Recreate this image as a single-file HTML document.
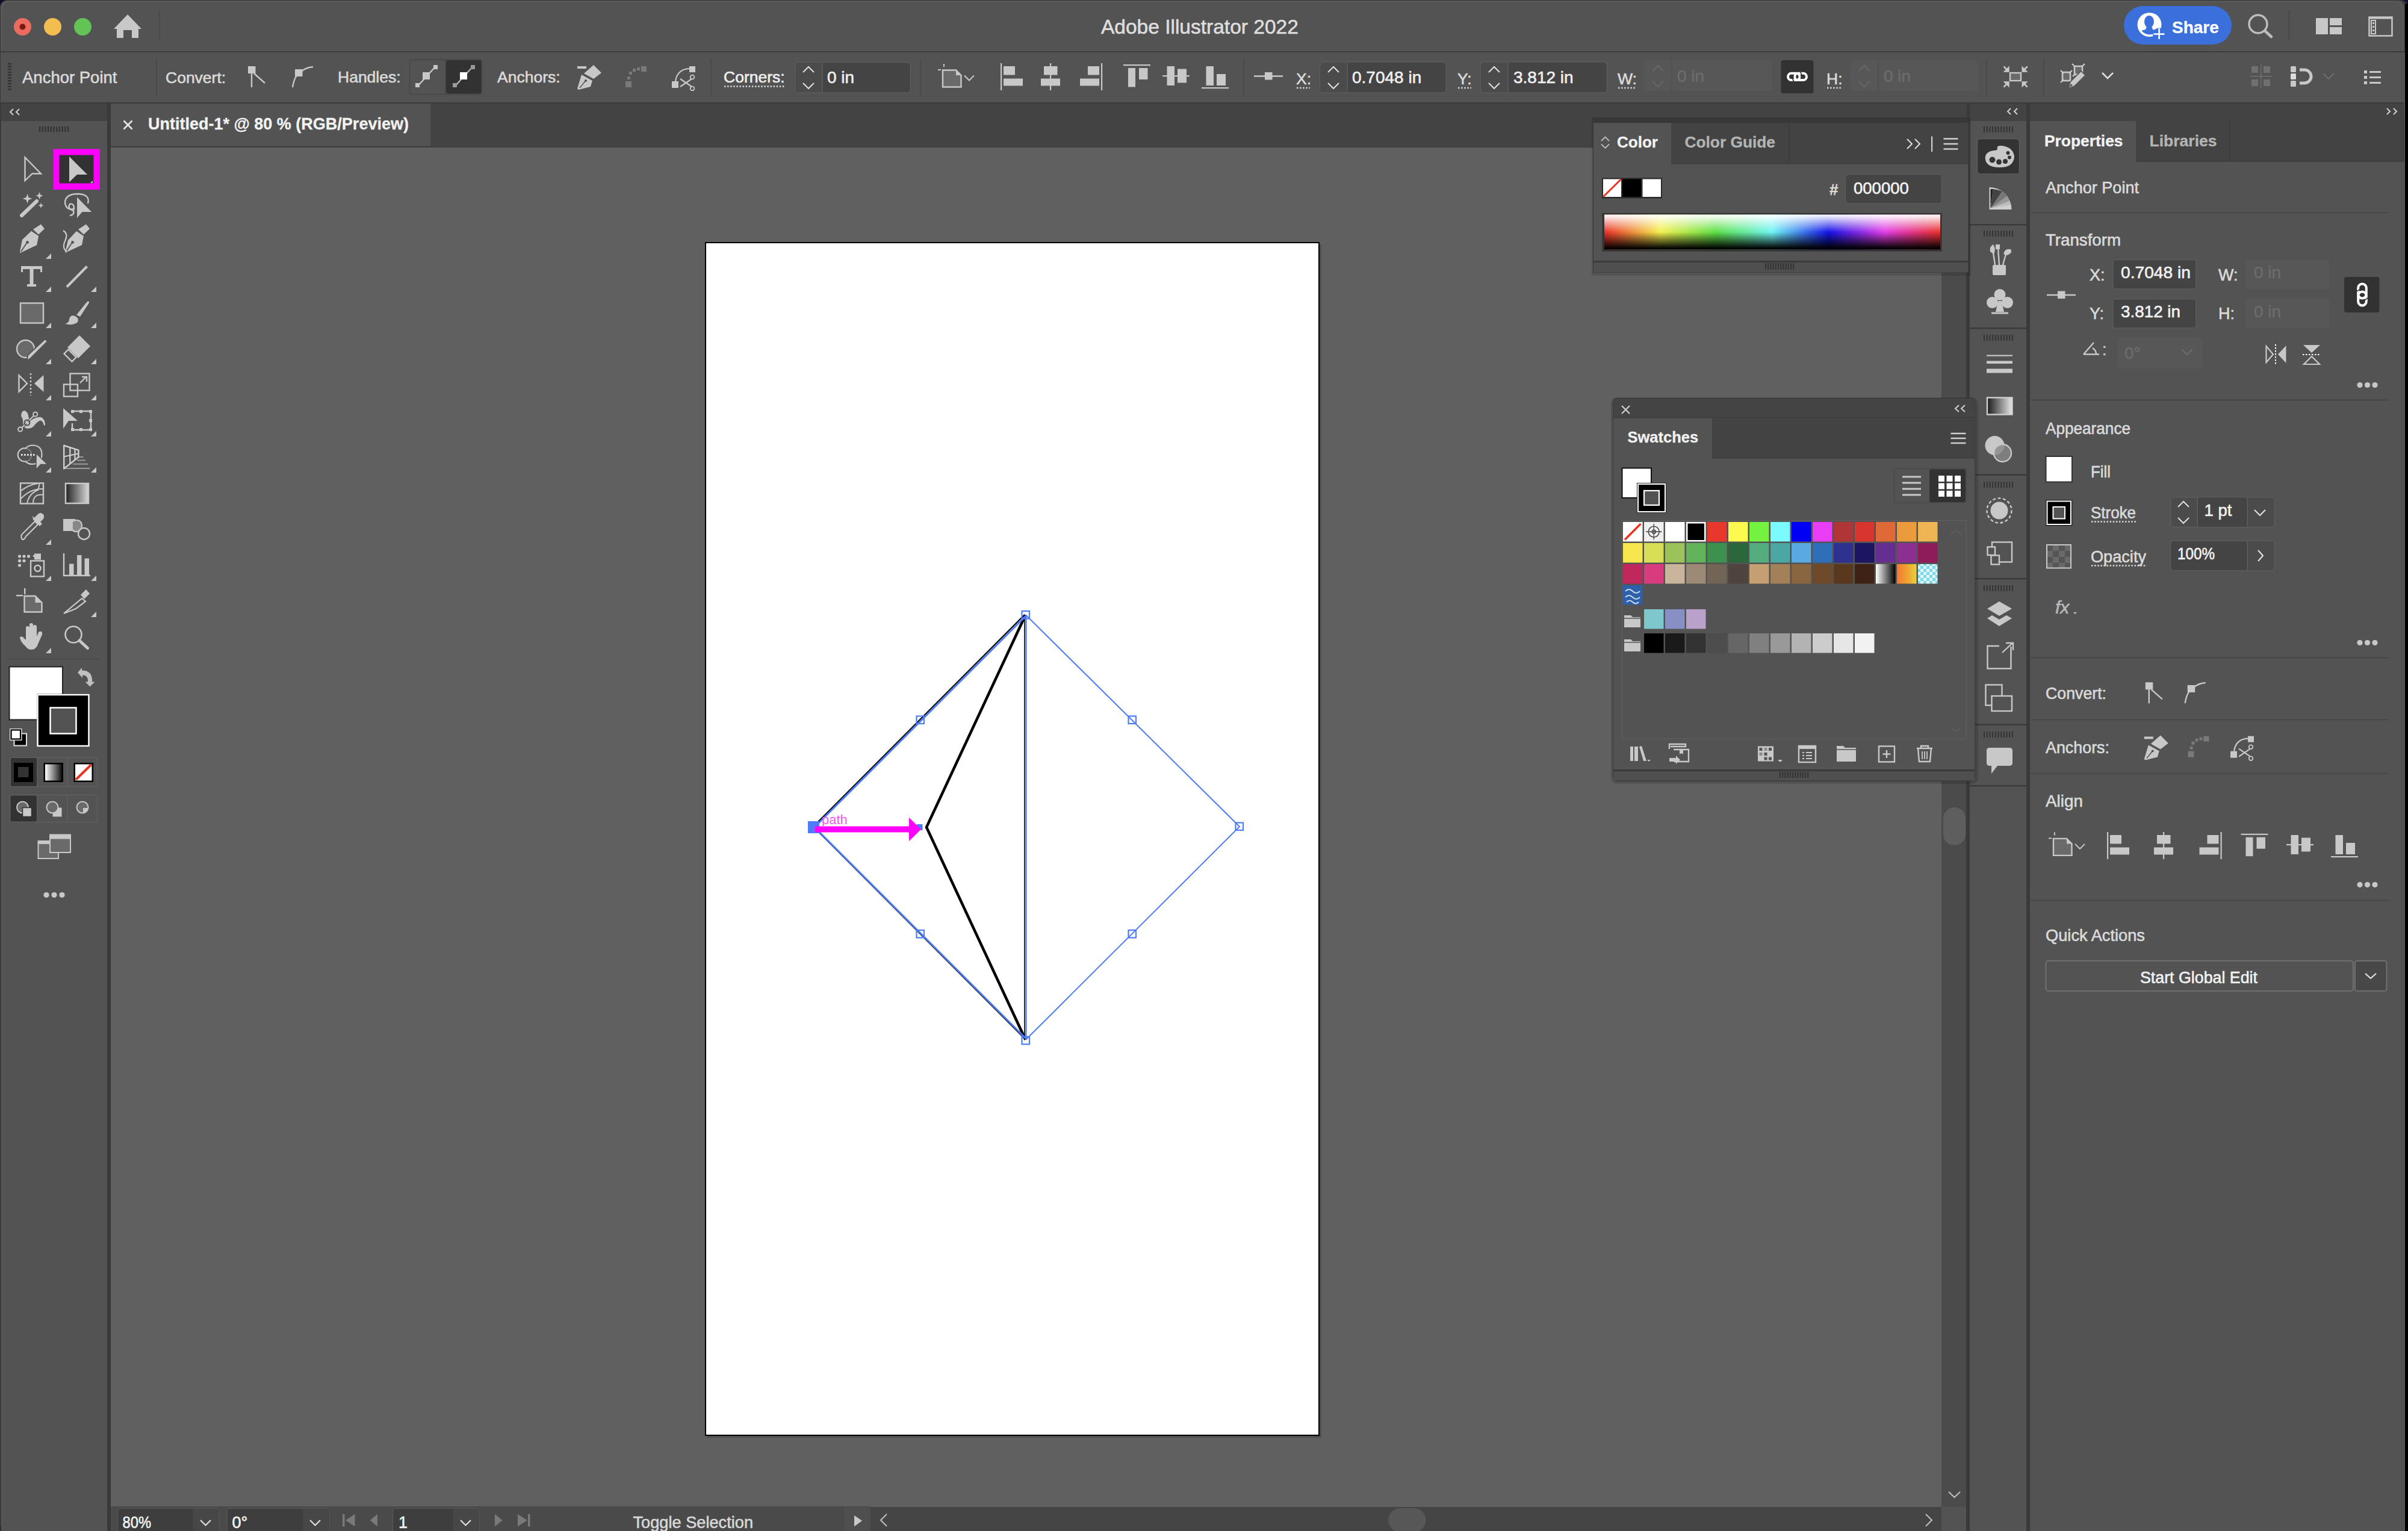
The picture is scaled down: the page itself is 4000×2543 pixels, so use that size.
<!DOCTYPE html>
<html><head><meta charset="utf-8">
<style>
*{margin:0;padding:0}
html,body{width:4000px;height:2543px;overflow:hidden;background:#2e2e2e}
svg{display:block}
text{font-family:"Liberation Sans",sans-serif;white-space:pre}
</style></head><body>
<svg width="4000" height="2543" viewBox="0 0 4000 2543">
<defs>
<linearGradient id="hue" x1="0" y1="0" x2="1" y2="0">
<stop offset="0" stop-color="#e8302a"/><stop offset="0.167" stop-color="#f4f050"/><stop offset="0.333" stop-color="#5ee048"/><stop offset="0.5" stop-color="#70f4f4"/><stop offset="0.667" stop-color="#1414e6"/><stop offset="0.833" stop-color="#e23ee6"/><stop offset="1" stop-color="#e8302a"/>
</linearGradient>
<linearGradient id="shade" x1="0" y1="0" x2="0" y2="1">
<stop offset="0" stop-color="#fff" stop-opacity="1"/><stop offset="0.5" stop-color="#fff" stop-opacity="0"/><stop offset="0.5" stop-color="#000" stop-opacity="0"/><stop offset="0.97" stop-color="#000" stop-opacity="1"/>
</linearGradient>
<linearGradient id="bw" x1="0" y1="0" x2="1" y2="0"><stop offset="0" stop-color="#fff"/><stop offset="1" stop-color="#000"/></linearGradient>
</defs>
<!-- ===== BASE ===== -->
<rect x="0" y="0" width="4000" height="40" fill="#140a2c"/>
<rect x="0" y="0" width="4000" height="2543" rx="12" fill="#3a3a3a"/>
<rect x="1" y="1" width="3993" height="84" rx="11" fill="#535353"/>
<rect x="1" y="40" width="3993" height="45" fill="#535353"/>
<path d="M3 85V14A11 11 0 0 1 14 3H3980A11 11 0 0 1 3991 14V85" fill="none" stroke="#5f5f5f" stroke-width="1.2"/>
<rect x="1" y="87" width="3993" height="83" fill="#535353"/>
<!-- left toolbar -->
<rect x="2.5" y="172" width="175.5" height="2371" fill="#535353"/>
<rect x="2.5" y="201" width="1.5" height="2342" fill="#5c5c5c"/>
<rect x="2.5" y="172" width="175.5" height="29" fill="#434343"/>
<!-- tab bar -->
<rect x="184" y="172" width="3083" height="72" fill="#434343"/>
<!-- canvas -->
<rect x="184" y="245" width="3041" height="2258" fill="#606060"/>
<rect x="3225" y="245" width="41" height="2298" fill="#4b4b4b"/>
<rect x="184" y="2503" width="3041" height="40" fill="#474747"/>
<!-- strip -->
<rect x="3272" y="172" width="94" height="2371" fill="#535353"/>
<rect x="3272" y="172" width="94" height="29" fill="#434343"/>
<!-- properties -->
<rect x="3372" y="172" width="622" height="2371" fill="#535353"/>
<rect x="3372" y="172" width="622" height="29" fill="#434343"/>
<!-- artboard -->
<rect x="1174" y="406" width="1021" height="1982" fill="#000" opacity="0.18"/>
<rect x="1171" y="402" width="1021" height="1983" fill="#000"/>
<rect x="1173" y="404" width="1017" height="1979" fill="#fff"/>
<rect x="3995" y="6" width="5" height="2537" fill="#000"/>
<rect x="3993.5" y="87" width="1.5" height="2456" fill="#5a5a5a"/>
<!-- ===== TITLEBAR ===== -->
<circle cx="37.5" cy="44.5" r="14.5" fill="#ec6b5f"/>
<circle cx="37.5" cy="44.5" r="5" fill="#7a1a12"/>
<circle cx="87.5" cy="44.5" r="14.5" fill="#f4bd4f"/>
<circle cx="137.5" cy="44.5" r="14.5" fill="#61c454"/>
<path d="M212 24 L235 48 L230 48 L230 63 L219 63 L219 50 L205 50 L205 63 L194 63 L194 48 L189 48 Z" fill="#c8c8c8"/>
<rect x="264" y="18" width="2" height="49" fill="#4a4a4a"/>
<text x="1829" y="56" font-size="33.5" fill="#dedede" stroke="#dedede" stroke-width="0.6">Adobe Illustrator 2022</text>
<rect x="3528" y="10" width="179" height="64" rx="32" fill="#3b6fdc"/>
<circle cx="3570.5" cy="41" r="20" fill="#fff"/>
<ellipse cx="3570" cy="36" rx="8" ry="10.2" fill="#3b6fdc"/>
<path d="M3566 44L3564 49Q3559 50 3557.5 51A16.4 16.4 0 0 0 3583.5 51Q3582 50 3576 49L3574 44Z" fill="#3b6fdc"/>
<circle cx="3586.5" cy="57" r="10.5" fill="#3b6fdc"/>
<rect x="3577.5" y="55.3" width="18" height="2.6" fill="#fff"/><rect x="3585.3" y="47.3" width="2.6" height="17.7" fill="#fff"/>
<text x="3608" y="55" font-size="28" font-weight="700" fill="#fff" stroke="#fff" stroke-width="0.3">Share</text>
<circle cx="3751" cy="40" r="15" fill="none" stroke="#bdbdbd" stroke-width="3.5"/>
<path d="M3762 51 L3773 61" stroke="#bdbdbd" stroke-width="4.5" stroke-linecap="round"/>
<rect x="3801" y="18" width="3" height="49" fill="#4a4a4a"/>
<rect x="3847" y="30" width="20" height="27" fill="#c8c8c8"/>
<rect x="3870" y="30" width="20" height="12" fill="#c8c8c8"/>
<rect x="3870" y="45" width="20" height="12" fill="#c8c8c8"/>
<rect x="3935.5" y="28.5" width="38" height="31" fill="none" stroke="#c8c8c8" stroke-width="2.5"/>
<rect x="3935.5" y="28.5" width="38" height="3" fill="#c8c8c8"/>
<rect x="3939" y="34" width="7" height="22" fill="none" stroke="#c8c8c8" stroke-width="2"/>
<rect x="3941" y="37" width="3" height="3" fill="#c8c8c8"/><rect x="3941" y="43" width="3" height="3" fill="#c8c8c8"/><rect x="3941" y="49" width="3" height="3" fill="#c8c8c8"/>
<!-- ===== CONTROLBAR ===== -->
<path d="M13 106h6M13 110.7h6M13 115.4h6M13 120.1h6M13 124.8h6M13 129.5h6M13 134.2h6M13 138.9h6M13 143.6h6M13 148.3h6" stroke="#333" stroke-width="2.4"/>
<g fill="#dadada" font-size="26.5" stroke="#dadada" stroke-width="0.6">
<text x="37" y="138" font-size="27.5">Anchor Point</text>
<text x="275" y="138">Convert:</text>
<text x="561" y="137">Handles:</text>
<text x="826" y="137">Anchors:</text>
<text x="1202" y="137" fill="#f0f0f0" stroke="#f0f0f0" stroke-width="0.6">Corners:</text>
<text x="2153" y="140">X:</text>
<text x="2421" y="140">Y:</text>
<text x="2687" y="140">W:</text>
<text x="3034" y="140">H:</text>
</g>
<path d="M1203 143.5h100M2154 146h22M2422 146h22M2688 146h28M3035 146h25" stroke="#dadada" stroke-width="2.5" stroke-dasharray="2.5 2.6"/>
<g fill="#4a4a4a">
<rect x="259" y="98" width="2" height="62"/>
<rect x="1180" y="98" width="2" height="62"/>
<rect x="1528" y="98" width="2" height="62"/>
<rect x="2065" y="98" width="2" height="62"/>
<rect x="3299" y="98" width="2" height="62"/>
<rect x="3394" y="98" width="2" height="62"/>
</g>
<!-- convert icons -->
<g fill="#c8c8c8" stroke="#c8c8c8" id="cv1">
<rect x="412" y="110" width="12.5" height="12" stroke="none"/>
<path d="M418 122V145M422 122L440 138" stroke-width="2.4" fill="none"/>
</g>
<g fill="#c8c8c8" stroke="#c8c8c8" id="cv2">
<rect x="490" y="115" width="12.5" height="12" stroke="none"/>
<path d="M486 145Q488 131 494 124M500 119Q508 112 520 111" stroke-width="2.4" fill="none"/>
</g>
<!-- handles group -->
<rect x="680.5" y="99" width="120" height="57.5" rx="4" fill="#535353" stroke="#474747" stroke-width="1.5"/>
<rect x="741" y="100" width="58.5" height="55.5" rx="3" fill="#323232"/>
<rect x="739.5" y="100" width="1.5" height="56" fill="#474747"/>
<g fill="#c8c8c8">
<path d="M693 144L723 111" stroke="#c8c8c8" stroke-width="2.4"/>
<rect x="690" y="138" width="7" height="7"/><rect x="720" y="108" width="7" height="7"/><rect x="702" y="120" width="12" height="12"/>
</g>
<path d="M755 144L785 111" stroke="#b0b0b0" stroke-width="2.4"/>
<rect x="752" y="138" width="7" height="7" fill="#9a9a9a"/><rect x="782" y="108" width="7" height="7" fill="#9a9a9a"/><rect x="764" y="120" width="12" height="12" fill="#fff"/>
<!-- anchors icons -->
<g id="an1"><g fill="#c8c8c8">
<rect x="959" y="110" width="15" height="4"/>
<path d="M970 122L986 108L999 121L986 131Z"/>
<path d="M966 124L984 134L981 144L961 149Q958 148 960 144Z"/>
</g>
<circle cx="973" cy="134" r="2" fill="#535353"/><path d="M963 146L972 135" stroke="#535353" stroke-width="1.5"/></g>
<g fill="#7a7a7a" id="an2">
<rect x="1039" y="135" width="10" height="10"/><rect x="1042" y="127" width="5" height="5"/><rect x="1045" y="119" width="5" height="5"/><rect x="1051" y="114" width="5" height="5"/><rect x="1058" y="112" width="5" height="5"/><rect x="1065" y="110" width="9" height="9"/>
</g>
<g fill="#c8c8c8" id="an3">
<rect x="1116" y="135" width="11" height="11"/><rect x="1145" y="110" width="10" height="10"/>
<path d="M1122 135Q1125 115 1145 114" stroke="#c8c8c8" stroke-width="2.2" fill="none"/>
<path d="M1130 131L1149 144M1130 144L1149 131" stroke="#c8c8c8" stroke-width="2.2"/>
<circle cx="1150" cy="128" r="3.3" fill="none" stroke="#c8c8c8" stroke-width="1.8"/><circle cx="1150" cy="147" r="3.3" fill="none" stroke="#c8c8c8" stroke-width="1.8"/>
</g>
<!-- corners input -->
<rect x="1321" y="103.5" width="191.5" height="50.5" rx="5" fill="#444" stroke="#5c5c5c" stroke-width="1.5"/>
<rect x="1322" y="104.5" width="43" height="48.5" rx="4" fill="#4b4b4b"/>
<rect x="1365" y="104" width="1.5" height="50" fill="#5c5c5c"/>
<path d="M1334 120L1343 111L1352 120M1334 138L1343 147L1352 138" stroke="#e0e0e0" stroke-width="2" fill="none"/>
<text x="1374" y="138" font-size="28" fill="#f0f0f0" stroke="#f0f0f0" stroke-width="0.6">0 in</text>
<!-- align icons -->
<g fill="#c8c8c8">
<g id="al0"><path d="M1566 116.5H1588L1596.5 125V144.5H1566Z" fill="#6a6a6a" stroke="#c8c8c8" stroke-width="2.4"/>
<path d="M1588 116.5V125H1596.5Z" fill="#c8c8c8"/>
<rect x="1558" y="115" width="5" height="2"/><rect x="1567" y="106" width="2" height="5"/>
<path d="M1602 125.5L1610 133.5L1618 125.5" stroke="#c8c8c8" stroke-width="2" fill="none"/></g>
<g id="al1"><rect x="1662" y="105" width="2.2" height="45"/><rect x="1667" y="110" width="19" height="14.5"/><rect x="1667" y="130.5" width="32" height="12"/></g>
<g id="al2"><rect x="1744" y="105" width="2.2" height="45"/><rect x="1734" y="110" width="22.5" height="14.5"/><rect x="1729" y="130.5" width="32" height="12"/></g>
<g id="al3"><rect x="1829" y="105" width="2.2" height="45"/><rect x="1807" y="110" width="19" height="14.5"/><rect x="1794" y="130.5" width="32" height="12"/></g>
<g id="al4"><rect x="1866" y="107" width="45" height="2.2"/><rect x="1874" y="113" width="12" height="31.5"/><rect x="1892" y="113" width="14.5" height="19"/></g>
<g id="al5"><rect x="1931" y="125" width="45" height="2.2"/><rect x="1938.5" y="110" width="12.5" height="32"/><rect x="1956" y="114.5" width="15" height="23"/></g>
<g id="al6"><rect x="1996" y="145" width="45" height="2.2"/><rect x="2003.5" y="110" width="12.5" height="32"/><rect x="2021" y="123" width="15" height="19"/></g>
</g>
<!-- transform point icon -->
<g id="tpt"><path d="M2083 126.5H2131" stroke="#c8c8c8" stroke-width="2.4"/>
<rect x="2101" y="120" width="12.5" height="12.5" fill="#c8c8c8"/></g>
<!-- X input -->
<rect x="2192.5" y="103" width="209.5" height="51" rx="5" fill="#444" stroke="#5c5c5c" stroke-width="1.5"/>
<rect x="2193.5" y="104" width="44" height="49" rx="4" fill="#4b4b4b"/>
<rect x="2237.5" y="103.5" width="1.5" height="50" fill="#5c5c5c"/>
<path d="M2206 120L2215 111L2224 120M2206 138L2215 147L2224 138" stroke="#e0e0e0" stroke-width="2" fill="none"/>
<text x="2246" y="138" font-size="28" fill="#f0f0f0" stroke="#f0f0f0" stroke-width="0.6">0.7048 in</text>
<!-- Y input -->
<rect x="2459.5" y="103" width="210" height="51" rx="5" fill="#444" stroke="#5c5c5c" stroke-width="1.5"/>
<rect x="2460.5" y="104" width="44" height="49" rx="4" fill="#4b4b4b"/>
<rect x="2504.5" y="103.5" width="1.5" height="50" fill="#5c5c5c"/>
<path d="M2473 120L2482 111L2491 120M2473 138L2482 147L2491 138" stroke="#e0e0e0" stroke-width="2" fill="none"/>
<text x="2514" y="138" font-size="28" fill="#f0f0f0" stroke="#f0f0f0" stroke-width="0.6">3.812 in</text>
<!-- W input disabled -->
<rect x="2731" y="100" width="212" height="51.5" rx="5" fill="#575757"/>
<rect x="2776" y="101" width="1.5" height="50" fill="#505050"/>
<path d="M2745 118L2754 109L2763 118M2745 135L2754 144L2763 135" stroke="#686868" stroke-width="2" fill="none"/>
<text x="2786" y="136" font-size="28" fill="#6c6c6c" stroke="#6c6c6c" stroke-width="0.6">0 in</text>
<!-- link -->
<rect x="2958.5" y="100" width="54" height="55" rx="4" fill="#323232"/>
<g fill="none" stroke="#fff" stroke-width="4">
<rect x="2970" y="121.8" width="19.5" height="11.3" rx="5.6"/><rect x="2981.3" y="121.8" width="19.7" height="11.3" rx="5.6"/>
</g>
<path d="M2980 135.5Q2976.5 131 2978.5 126.5M2990.5 119.5Q2994 124 2992 128.5" stroke="#323232" stroke-width="1.6" fill="none"/>
<!-- H input disabled -->
<rect x="3074" y="100" width="212" height="51.5" rx="5" fill="#575757"/>
<rect x="3119" y="101" width="1.5" height="50" fill="#505050"/>
<path d="M3088 118L3097 109L3106 118M3088 135L3097 144L3106 135" stroke="#686868" stroke-width="2" fill="none"/>
<text x="3129" y="136" font-size="28" fill="#6c6c6c" stroke="#6c6c6c" stroke-width="0.6">0 in</text>
<!-- isolate icon -->
<rect x="3339" y="121" width="18" height="13" fill="#6a6a6a" stroke="#c8c8c8" stroke-width="2.4"/>
<g fill="#c8c8c8">
<path d="M3337.7 109.5V119.7H3327.5Z"/><path d="M3358.5 109.5V119.7H3368.7Z"/>
<path d="M3337.7 145.5V135.3H3327.5Z"/><path d="M3358.5 145.5V135.3H3368.7Z"/>
</g>
<path d="M3328.5 110.5L3334 116M3367.7 110.5L3362.2 116M3328.5 144.5L3334 139M3367.7 144.5L3362.2 139" stroke="#c8c8c8" stroke-width="2.6"/>
<!-- edit icon -->
<rect x="3426" y="120" width="13" height="14" fill="#6a6a6a" stroke="#c8c8c8" stroke-width="2.6"/>
<rect x="3446" y="110" width="13" height="14" fill="#6a6a6a" stroke="#c8c8c8" stroke-width="2.6"/>
<path d="M3423 117l5 5M3442 117l-5 5M3423 137l5 -5M3447 111l-5 -5M3458 111l5 -5M3443 127l5 -5" stroke="#c8c8c8" stroke-width="2.4"/>
<path d="M3436 147L3439 136L3457 118L3464 125L3446 143Z" fill="#c8c8c8" stroke="#535353" stroke-width="1.6"/>
<path d="M3438 145L3440 139L3443 142Z" fill="#535353"/>
<path d="M3492 121L3501 130L3510 121" stroke="#e0e0e0" stroke-width="2.5" fill="none"/>
<!-- grid icon disabled -->
<g fill="#707070">
<rect x="3740" y="110" width="11" height="11"/><rect x="3760" y="110" width="11" height="11"/><rect x="3740" y="132" width="11" height="11"/><rect x="3760" y="132" width="11" height="11"/>
<rect x="3738" y="126" width="37" height="1.5"/><rect x="3755" y="107" width="1.5" height="39"/>
</g>
<!-- snap icon -->
<g fill="#c8c8c8">
<rect x="3805" y="110" width="9" height="10" rx="1.5"/><rect x="3805" y="122" width="9" height="10" rx="1.5" fill="#ddd"/><rect x="3805" y="134" width="9" height="10" rx="1.5"/>
<path d="M3820 116H3828A11 11 0 0 1 3828 138H3820" stroke="#c8c8c8" stroke-width="5" fill="none"/>
</g>
<path d="M3859 122L3868 131L3877 122" stroke="#6e6e6e" stroke-width="2" fill="none"/>
<!-- list icon -->
<g fill="#c8c8c8">
<rect x="3927" y="117" width="5" height="5"/><rect x="3927" y="126" width="5" height="5"/><rect x="3927" y="135" width="5" height="5"/>
<rect x="3936" y="118" width="19" height="3"/><rect x="3936" y="127" width="19" height="3"/><rect x="3936" y="136" width="19" height="3"/>
</g>
<!-- ===== TOOLS ===== -->
<path d="M22 181L17 186L22 191M32 181L27 186L32 191" stroke="#d0d0d0" stroke-width="2" fill="none"/>
<path d="M66 210v9M70.7 210v9M75.4 210v9M80.1 210v9M84.8 210v9M89.5 210v9M94.2 210v9M98.9 210v9M103.6 210v9M108.3 210v9M113 210v9" stroke="#333" stroke-width="2.2"/>
<g fill="#c8c8c8">
<!-- row1 selection -->
<path d="M41.5 261.5V300L53.5 288.5H68Z" fill="none" stroke="#c8c8c8" stroke-width="2.4" stroke-linejoin="miter"/>
<rect x="88.5" y="247.5" width="77.5" height="67.5" fill="#ff00ff"/>
<rect x="98.5" y="257.5" width="57" height="47" fill="#323232"/>
<path d="M115 260V302.5L128 290H145Z"/>
<path d="M154 300L150 304h4z" fill="#c8c8c8"/>
<!-- row2 magic wand / lasso -->
<path d="M36 358L61 334" stroke="#c8c8c8" stroke-width="6" stroke-linecap="round"/>
<path d="M45.5 322l2 6 6 2 -6 2 -2 6 -2 -6 -6 -2 6 -2z"/>
<path d="M65.5 319l1.6 4.5 4.5 1.6 -4.5 1.6 -1.6 4.5 -1.6 -4.5 -4.5 -1.6 4.5 -1.6z"/>
<path d="M68 336.5l1.2 3.5 3.5 1.2 -3.5 1.2 -1.2 3.5 -1.2 -3.5 -3.5 -1.2 3.5 -1.2z"/>
<path d="M128 327.5V362L136.5 352H152Z"/>
<path d="M146 338Q150 323 130 322Q108 322 108 337Q110 350 123 347Q123 337 116 339Q111 346 122 350Q124 357 116 358" fill="none" stroke="#c8c8c8" stroke-width="2.4"/>
<!-- row3 pen / curvature pen -->
<path d="M55 381l13-8.5 6 7.5 -10 9.5z"/>
<path d="M52 384L64 392L61 407L34 420L46 402Q43 399 46 397L33 418L37 398Z"/>
<path d="M52 384L64 392L61 407L33 420L38 399Z"/>
<circle cx="45.5" cy="402.5" r="2.4" fill="#535353"/><path d="M35 418L44 404" stroke="#535353" stroke-width="1.8"/>
<path d="M130 381l13-8.5 6 7.5 -10 9.5z"/>
<path d="M127 384L139 392L136 407L108 420L113 399Z"/>
<circle cx="120.5" cy="402.5" r="2.4" fill="#535353"/><path d="M110 418L119 404" stroke="#535353" stroke-width="1.8"/>
<path d="M105 383Q113 388 109 398Q102 412 111 418" fill="none" stroke="#c8c8c8" stroke-width="2.2"/>
<!-- row4 type / line -->
<path d="M35 442h35v10h-3v-5h-11.5v25h4.5v4h-15v-4h4.5v-25h-11.5v5h-3z"/>
<path d="M111 476.5L144.5 442.5" stroke="#c8c8c8" stroke-width="4"/>
<!-- row5 rect / brush -->
<rect x="34" y="503.5" width="38" height="33" fill="#6a6a6a" stroke="#c8c8c8" stroke-width="2.4"/>
<path d="M127 523L144 502Q148 498 148 503L133 526Z"/>
<path d="M125 525Q133 530 128 536Q120 541 108 538Q115 536 115 530Q117 522 125 525Z"/>
<!-- row6 shaper / eraser -->
<circle cx="42.5" cy="579.5" r="14.5" fill="#6a6a6a" stroke="#c8c8c8" stroke-width="2.4"/>
<path d="M46 590L75 563L79 567L51 595L45 599Z" stroke="#535353" stroke-width="2"/>
<path d="M132 557L150 575L130 595L112 577Z"/>
<path d="M113.5 580.5L126.5 593.5L119.5 600.5L106.5 587.5Z" fill="none" stroke="#c8c8c8" stroke-width="2.4"/>
<!-- row7 reflect / scale -->
<path d="M31.5 623.5V650.5L45 637Z" fill="none" stroke="#c8c8c8" stroke-width="2.4"/>
<path d="M72.5 623V651L57 637Z"/>
<path d="M51 620v37" stroke="#c8c8c8" stroke-width="2.4" stroke-dasharray="3 3"/>
<rect x="116.5" y="620.5" width="32" height="28" fill="none" stroke="#c8c8c8" stroke-width="2.4"/>
<rect x="106" y="638.5" width="23" height="20" fill="none" stroke="#c8c8c8" stroke-width="2.4"/>
<path d="M133 636L143 626M136 626h8v8" fill="none" stroke="#c8c8c8" stroke-width="2.4"/>
<!-- row8 puppet / free transform -->
<path d="M35 691Q35.5 682 41 682Q46.5 684 47.5 693Q48.5 698 52.5 697.5Q61 692 68.5 693Q75.5 697 75 706.5L73.2 707Q71 698 66.5 698.5Q61 701 56 708Q50 713 43.5 711.5Q38 709 38 702Q38.5 696 35 691Z"/>
<path d="M33.6 713L58.7 688" stroke="#535353" stroke-width="4"/>
<path d="M33.6 713L58.7 688" stroke="#c8c8c8" stroke-width="2"/>
<circle cx="33.6" cy="713" r="3.6" fill="#535353" stroke="#c8c8c8" stroke-width="2"/>
<circle cx="58.7" cy="688" r="3.6" fill="#535353" stroke="#c8c8c8" stroke-width="2"/>
<circle cx="44.9" cy="702" r="4.5" fill="none" stroke="#535353" stroke-width="2"/>
<circle cx="44.9" cy="702" r="2.2" fill="#c8c8c8"/>
<path d="M105 678V712L114 699H129Z"/>
<path d="M120 683H151V714H120V703" fill="none" stroke="#c8c8c8" stroke-width="2.4"/>
<rect x="118" y="681" width="5" height="5"/><rect x="132" y="681" width="5" height="5"/><rect x="148" y="681" width="5" height="5"/><rect x="148" y="696" width="5" height="5"/><rect x="148" y="711" width="5" height="5"/><rect x="132" y="711" width="5" height="5"/><rect x="118" y="711" width="5" height="5"/>
<!-- row9 shape builder / perspective -->
<path d="M44 745A11 11 0 1 0 44 766" fill="none" stroke="#c8c8c8" stroke-width="2.2"/>
<path d="M42.5 745Q46 740 54 739.5Q69.5 740 69.5 755Q69.5 770 54 771Q46 771 42.5 766" fill="none" stroke="#c8c8c8" stroke-width="2.2"/>
<path d="M44 745A11 11 0 0 1 45 766" fill="none" stroke="#8a8a8a" stroke-width="1.8"/>
<path d="M35 755.5h24" stroke="#fff" stroke-width="2.4" stroke-dasharray="2.6 2.4"/>
<path d="M60 753V780L67.5 771.5H79Z" stroke="#535353" stroke-width="1.5"/>
<path d="M130 759h8.5M128 764.5h14M121 770.8h25M109 778h40.5" stroke="#9a9a9a" stroke-width="2"/>
<path d="M106.2 740V778.5L130.4 759.2V747.7Z" fill="#535353" stroke="#d0d0d0" stroke-width="2.4" stroke-linejoin="round"/>
<path d="M116.3 743V770M124.5 746V764M106 758.5L130.4 753.5" stroke="#d0d0d0" stroke-width="2.2"/>
<!-- row10 mesh / gradient -->
<rect x="34" y="802.5" width="38" height="34" fill="none" stroke="#c8c8c8" stroke-width="2.4"/>
<path d="M35 815Q48 805 63 803M35 828Q50 812 71 812M45 836Q48 820 63 814Q66 805 65 803M55 836Q55 820 71 822" fill="none" stroke="#c8c8c8" stroke-width="2"/>
<defs><linearGradient id="tg" x1="0" x2="1"><stop offset="0" stop-color="#222"/><stop offset="1" stop-color="#d8d8d8"/></linearGradient></defs>
<rect x="109" y="803" width="38" height="33" fill="url(#tg)" stroke="#c8c8c8" stroke-width="2.5"/>
<!-- row11 eyedropper / blend -->
<path d="M37 896Q33 890 38 886L58 866L63 871L43 891Q40 897 37 896Z" fill="none" stroke="#c8c8c8" stroke-width="2.2"/>
<path d="M55 863L66 874L70 870L67 867L72 862Q75 855 70 853Q66 850 62 855L57 860L54 857Z"/>
<rect x="105" y="862" width="20" height="20"/>
<path d="M120 872Q118 864 127 864Q135 864 136 872Q136 882 128 883Q118 884 120 872Z" fill="#888" stroke="#c8c8c8" stroke-width="2.2"/>
<circle cx="139.5" cy="886.5" r="9.5" fill="#535353" stroke="#c8c8c8" stroke-width="2.4"/>
<!-- row12 symbol sprayer / graph -->
<circle cx="32.5" cy="924" r="2.6"/><circle cx="40" cy="924" r="2.6"/><circle cx="47.5" cy="924" r="2.6"/><circle cx="32.5" cy="931.5" r="2.6"/><circle cx="40" cy="931.5" r="2.6"/><circle cx="32.5" cy="939" r="2.6"/>
<rect x="51" y="931.5" width="22" height="26" fill="none" stroke="#c8c8c8" stroke-width="2.4"/>
<rect x="57" y="919.5" width="11" height="10"/><rect x="55" y="922" width="4" height="3"/>
<circle cx="62.5" cy="944" r="5" fill="none" stroke="#c8c8c8" stroke-width="2.6"/>
<path d="M106 919V956H150" fill="none" stroke="#c8c8c8" stroke-width="2.4"/>
<rect x="115" y="936.5" width="7.5" height="19"/><rect x="128" y="922" width="7.5" height="33.5"/><rect x="140.5" y="927.5" width="7.5" height="28"/>
<!-- row13 artboard / slice -->
<path d="M40.5 990H58.5L69.5 1001V1016.5H40.5Z" fill="#6a6a6a" stroke="#c8c8c8" stroke-width="2.4"/>
<path d="M58.5 990V1001H69.5Z"/>
<rect x="27" y="988" width="11" height="2.4"/><rect x="40" y="977" width="2.4" height="10"/>
<path d="M106 1019L136 994L142 999L126 1011Z" fill="none" stroke="#c8c8c8" stroke-width="2.2"/>
<path d="M134 988L143 979L149 986L140 995Z"/>
<!-- row14 hand / zoom -->
<path d="M42 1073Q34 1066 33 1059Q34 1056 38 1058L43 1063V1043Q43 1040 46 1040Q49 1040 49 1043V1055V1038Q49 1035 52 1035Q55 1035 55 1038V1055V1041Q55 1038 58 1038Q61 1038 61 1041V1057L64 1050Q66 1048 69 1049Q71 1051 70 1054L63 1070Q60 1079 52 1079Q46 1079 42 1073Z"/>
<circle cx="122" cy="1054" r="13.5" fill="none" stroke="#c8c8c8" stroke-width="2.6"/>
<path d="M132 1064L145.5 1076.5" stroke="#c8c8c8" stroke-width="5" stroke-linecap="round"/>
<!-- corner triangles -->
<path d="M85 476v9h-9z"/><path d="M160 476v9h-9z"/>
<path d="M85 536v9h-9z"/><path d="M160 536v9h-9z"/>
<path d="M85 596v9h-9z"/><path d="M160 596v9h-9z"/>
<path d="M85 656v9h-9z"/><path d="M160 656v9h-9z"/>
<path d="M85 716v9h-9z"/><path d="M160 716v9h-9z"/>
<path d="M85 776v9h-9z"/><path d="M160 776v9h-9z"/>
<path d="M85 421v9h-9z"/>
<path d="M85 896v9h-9z"/>
<path d="M85 956v9h-9z"/><path d="M160 956v9h-9z"/>
<path d="M160 1016v9h-9z"/>
<path d="M85 1076v9h-9z"/>
</g>
<rect x="15" y="1094" width="150" height="1.5" fill="#4a4a4a"/>
<!-- fill stroke -->
<rect x="15.5" y="1107.5" width="88.5" height="88" fill="#fff" stroke="#222" stroke-width="2"/>
<rect x="61" y="1152.5" width="88" height="88" fill="#2a2a2a"/>
<rect x="62.5" y="1154" width="85" height="85" fill="#000" stroke="#fff" stroke-width="2.5"/>
<rect x="83.5" y="1175.5" width="43" height="43" fill="#535353" stroke="#fff" stroke-width="2.5"/>
<path d="M129 1117l7-8v4.5q17 0 17 17v2h4.5l-8 8-8-8h4.5v-2q0-9-9-9v4.5z" fill="#c0c0c0"/>
<rect x="23.5" y="1218.5" width="20.5" height="20" fill="#000" stroke="#e0e0e0" stroke-width="2"/>
<rect x="16" y="1210" width="20.5" height="20" fill="#e0e0e0"/>
<rect x="18.5" y="1212.5" width="15.5" height="15" fill="#fff" stroke="#000" stroke-width="2.2"/>
<!-- mode buttons -->
<rect x="17.5" y="1258.5" width="144" height="48" rx="3" fill="#535353" stroke="#5f5f5f" stroke-width="1.5"/>
<rect x="18" y="1259" width="43" height="47" rx="2" fill="#323232"/>
<rect x="61" y="1259" width="1.5" height="47" fill="#5f5f5f"/><rect x="111" y="1259" width="1.5" height="47" fill="#5f5f5f"/>
<rect x="23" y="1267" width="32" height="32" fill="#000"/><rect x="30" y="1274" width="17.5" height="17" fill="#333"/>
<rect x="72.5" y="1267" width="32.5" height="32" fill="#000"/>
<defs><linearGradient id="wg" x1="0" x2="1"><stop offset="0" stop-color="#fff"/><stop offset="1" stop-color="#111"/></linearGradient></defs>
<rect x="75" y="1269.5" width="27.5" height="27" fill="url(#wg)"/>
<rect x="122.5" y="1267" width="32.5" height="32" fill="#000"/><rect x="125" y="1269.5" width="27.5" height="27" fill="#fff"/>
<path d="M126 1295L151.5 1270" stroke="#e8341e" stroke-width="4"/>
<!-- draw modes -->
<rect x="16.5" y="1320.5" width="145" height="45" rx="3" fill="#535353" stroke="#5f5f5f" stroke-width="1.5"/>
<rect x="17.5" y="1321.5" width="43.5" height="43" rx="2" fill="#323232"/>
<rect x="61" y="1321" width="1.5" height="44" fill="#5f5f5f"/><rect x="111" y="1321" width="1.5" height="44" fill="#5f5f5f"/>
<circle cx="37.5" cy="1341" r="9.5" fill="#6a6a6a" stroke="#c8c8c8" stroke-width="2"/>
<rect x="37.5" y="1341.5" width="15" height="15" fill="#c8c8c8" stroke="#323232" stroke-width="1.5"/>
<rect x="87.5" y="1341.5" width="15" height="15" fill="#c8c8c8"/>
<circle cx="87" cy="1341" r="9.5" fill="#6a6a6a" stroke="#c8c8c8" stroke-width="2"/>
<circle cx="137" cy="1341" r="9.5" fill="#6a6a6a" stroke="#c8c8c8" stroke-width="2"/>
<path d="M138 1342h8.5a9 9 0 0 1 -8.5 8.5z" fill="#c8c8c8"/>
<!-- screen mode -->
<rect x="63.5" y="1397" width="33.5" height="29" fill="#6a6a6a" stroke="#c8c8c8" stroke-width="2"/>
<rect x="63.5" y="1397" width="33.5" height="5" fill="#c8c8c8"/>
<rect x="83" y="1386.5" width="34" height="29.5" fill="#6a6a6a" stroke="#c8c8c8" stroke-width="2"/>
<rect x="83" y="1386.5" width="34" height="7" fill="#c8c8c8"/>
<circle cx="77" cy="1486.5" r="4.6" fill="#c8c8c8"/><circle cx="90" cy="1486.5" r="4.6" fill="#c8c8c8"/><circle cx="103" cy="1486.5" r="4.6" fill="#c8c8c8"/>
<!-- ===== TAB ===== -->
<rect x="184" y="172" width="531.5" height="70.5" fill="#535353"/>
<path d="M205.5 200.5L219.5 214.5M219.5 200.5L205.5 214.5" stroke="#e8e8e8" stroke-width="2.6"/>
<text x="246" y="215" font-size="27" font-weight="700" fill="#f2f2f2" stroke="#f2f2f2" stroke-width="0.3">Untitled-1* @ 80 % (RGB/Preview)</text>
<!-- ===== DRAWING ===== -->
<path d="M1703.5 1021.5L1539 1374L1703.5 1727" fill="none" stroke="#000" stroke-width="4.5" stroke-linejoin="miter"/>
<path d="M1702 1021.5V1727" stroke="#000" stroke-width="1.6"/>
<path d="M1702 1021L1351 1373L1702 1725" fill="none" stroke="#000" stroke-width="2.2"/>
<path d="M1703.5 1023.5L1353 1374L1703.5 1724.5" fill="none" stroke="#4e7cf6" stroke-width="3"/>
<path d="M1704.5 1021.5V1727" stroke="#4e7cf6" stroke-width="2.2"/>
<path d="M1704 1021.5L2059 1373L1704 1727" fill="none" stroke="#4e7cf6" stroke-width="2"/>
<g fill="none" stroke="#4e7cf6" stroke-width="2.2">
<rect x="1697.5" y="1015" width="12.5" height="12.5"/>
<rect x="1697.5" y="1722" width="12.5" height="12.5"/>
<rect x="2052.5" y="1366.5" width="12.5" height="12.5"/>
<rect x="1522.5" y="1189.5" width="12.5" height="12.5"/>
<rect x="1874.5" y="1189.5" width="12.5" height="12.5"/>
<rect x="1522.5" y="1545" width="12.5" height="12.5"/>
<rect x="1874.5" y="1545" width="12.5" height="12.5"/>
</g>
<rect x="1342" y="1364" width="19" height="20" fill="#4e7cf6"/>
<rect x="1523" y="1369" width="9.5" height="10" fill="#4e7cf6"/>
<rect x="1354" y="1372.5" width="158" height="10" fill="#ff00ff"/>
<path d="M1510 1358L1530 1377.5L1510 1397Z" fill="#ff00ff"/>
<text x="1365" y="1369" font-size="22" fill="#f25cf2">path</text>
<!-- ===== STRIP ===== -->
<path d="M3340 180L3335 185L3340 190M3351 180L3346 185L3351 190" stroke="#d0d0d0" stroke-width="2" fill="none"/>
<g fill="#3a3a3a">
<rect x="3272" y="372" width="94" height="2.5"/>
<rect x="3272" y="544" width="94" height="2.5"/>
<rect x="3272" y="787.5" width="94" height="2.5"/>
<rect x="3272" y="960" width="94" height="2.5"/>
<rect x="3272" y="1202.5" width="94" height="2.5"/>
<rect x="3272" y="1304" width="94" height="2.5"/>
</g>
<g stroke="#333" stroke-width="2">
<path d="M3296 210v10M3300.7 210v10M3305.4 210v10M3310.1 210v10M3314.8 210v10M3319.5 210v10M3324.2 210v10M3328.9 210v10M3333.6 210v10M3338.3 210v10M3343 210v10"/>
<path d="M3296 383v10M3300.7 383v10M3305.4 383v10M3310.1 383v10M3314.8 383v10M3319.5 383v10M3324.2 383v10M3328.9 383v10M3333.6 383v10M3338.3 383v10M3343 383v10"/>
<path d="M3296 556v10M3300.7 556v10M3305.4 556v10M3310.1 556v10M3314.8 556v10M3319.5 556v10M3324.2 556v10M3328.9 556v10M3333.6 556v10M3338.3 556v10M3343 556v10"/>
<path d="M3296 800v10M3300.7 800v10M3305.4 800v10M3310.1 800v10M3314.8 800v10M3319.5 800v10M3324.2 800v10M3328.9 800v10M3333.6 800v10M3338.3 800v10M3343 800v10"/>
<path d="M3296 972v10M3300.7 972v10M3305.4 972v10M3310.1 972v10M3314.8 972v10M3319.5 972v10M3324.2 972v10M3328.9 972v10M3333.6 972v10M3338.3 972v10M3343 972v10"/>
<path d="M3296 1215v10M3300.7 1215v10M3305.4 1215v10M3310.1 1215v10M3314.8 1215v10M3319.5 1215v10M3324.2 1215v10M3328.9 1215v10M3333.6 1215v10M3338.3 1215v10M3343 1215v10"/>
</g>
<rect x="3284.5" y="230.5" width="70" height="58.5" rx="5" fill="#333" stroke="#5c5c5c" stroke-width="1.5"/>
<path d="M3298 265Q3296 252 3312 250Q3318 250 3318 247Q3316 242 3324 242Q3344 244 3346 260Q3345 278 3322 278Q3300 278 3298 265Z" fill="#c8c8c8"/>
<g fill="#333"><circle cx="3309.5" cy="265.5" r="5"/><circle cx="3320.5" cy="269" r="4.5"/><circle cx="3331" cy="268" r="4"/><circle cx="3338" cy="261.5" r="3"/><circle cx="3335.5" cy="254" r="3"/></g>
<path d="M3304.5 311V348H3341.5A37 37 0 0 0 3304.5 311Z" fill="#cfcfcf"/>
<path d="M3306.5 314V346L3311 314Z" fill="#222"/>
<path d="M3306.5 346L3311 314Q3320 315 3326 318Z" fill="#444"/>
<path d="M3306.5 346L3326 318Q3332 322 3334 326Z" fill="#777"/>
<path d="M3306.5 346L3334 326Q3337 330 3338 334Z" fill="#999"/>
<path d="M3306.5 346L3338 334Q3339.5 338 3339.5 340Z" fill="#bbb"/>
<g fill="#c8c8c8">
<rect x="3310" y="440" width="22" height="17" rx="2"/>
<path d="M3314 440L3311 420M3321 440L3319 412M3327 440L3332 422" stroke="#c8c8c8" stroke-width="2.4"/>
<path d="M3306 418Q3304 410 3311 406Q3316 414 3312 422Z"/>
<rect x="3315" y="406" width="7" height="8"/>
<path d="M3328 422Q3330 412 3340 414Q3344 420 3334 424Z"/>
<circle cx="3322" cy="489.5" r="9.5"/><circle cx="3309.5" cy="502.5" r="9.5"/><circle cx="3334.5" cy="502.5" r="9.5"/>
<path d="M3319 500L3315 518H3329L3325 500Z"/>
<rect x="3308" y="518.5" width="28" height="3"/>
<rect x="3300" y="589.5" width="43" height="2.2"/>
<rect x="3300" y="599.5" width="43" height="4.5"/>
<rect x="3300" y="612.5" width="43" height="7"/>
</g>
<defs><linearGradient id="sg" x1="0" x2="1"><stop offset="0" stop-color="#1a1a1a"/><stop offset="1" stop-color="#e8e8e8"/></linearGradient></defs>
<rect x="3301" y="660.5" width="41.5" height="28" fill="url(#sg)" stroke="#d0d0d0" stroke-width="2.4"/>
<circle cx="3313.5" cy="740" r="16" fill="#c8c8c8"/>
<circle cx="3326.5" cy="752.5" r="14.5" fill="#888" fill-opacity="0.8" stroke="#c8c8c8" stroke-width="2.4"/>
<circle cx="3321" cy="848" r="14.5" fill="#c8c8c8"/>
<circle cx="3321" cy="848" r="20.5" fill="none" stroke="#c8c8c8" stroke-width="2.4" stroke-dasharray="5 3.5"/>
<g fill="none" stroke="#c8c8c8" stroke-width="2.4">
<rect x="3309" y="900.5" width="33" height="33"/>
<rect x="3301.5" y="908.5" width="12.5" height="13.5" fill="#535353"/>
<rect x="3307.5" y="922.5" width="13.5" height="15" fill="#535353"/>
<path d="M3340.5 1074V1110.5H3301.5V1073H3321"/>
<path d="M3326 1084L3343 1068M3332 1068H3344V1080"/>
<rect x="3298.5" y="1137.5" width="27" height="34"/>
<rect x="3308.5" y="1156" width="33.5" height="25" fill="#535353"/>
</g>
<g fill="#c8c8c8">
<path d="M3321 999L3342 1011L3321 1023L3301 1011Z"/>
<path d="M3301 1027L3309 1022L3321 1029L3333 1022L3342 1027L3321 1040Z"/>
<path d="M3305 1242H3338Q3343 1242 3343 1247V1267Q3343 1272 3338 1272H3318L3308 1285V1272H3305Q3300 1272 3300 1267V1247Q3300 1242 3305 1242Z"/>
</g>
<!-- ===== COLOR PANEL ===== -->
<rect x="2644" y="196" width="630" height="262" fill="#000" opacity="0.12"/>
<rect x="2646" y="195" width="624" height="258" fill="#383838"/>
<rect x="2647" y="204" width="622.5" height="229" fill="#535353"/>
<rect x="2776" y="204" width="493.5" height="68" fill="#434343"/>
<rect x="2776" y="271" width="493.5" height="1.5" fill="#3d3d3d"/>
<rect x="2971" y="204" width="1.5" height="68" fill="#3a3a3a"/>
<path d="M2660 234L2666.5 227.5L2673 234M2660 239.5L2666.5 246L2673 239.5" stroke="#bdbdbd" stroke-width="1.8" fill="none"/>
<text x="2686" y="245" font-size="26" font-weight="700" fill="#f2f2f2" stroke="#f2f2f2" stroke-width="0.3">Color</text>
<text x="2798.5" y="245" font-size="26.3" font-weight="700" fill="#b4b4b4" stroke="#b4b4b4" stroke-width="0.3">Color Guide</text>
<path d="M3168 231L3176 239L3168 247M3181 231L3189 239L3181 247" stroke="#e0e0e0" stroke-width="2" fill="none"/>
<rect x="3208" y="226.5" width="2.2" height="25.5" fill="#d0d0d0"/>
<path d="M3228.5 230.5h24M3228.5 239h24M3228.5 247.5h24" stroke="#d0d0d0" stroke-width="2.4"/>
<rect x="2661" y="295.5" width="100" height="34" fill="#2a2a2a"/>
<rect x="2663" y="297.5" width="30" height="29.5" fill="#fff"/>
<path d="M2663.5 326.5L2693 297.5" stroke="#e8341e" stroke-width="3"/>
<rect x="2695" y="297.5" width="31" height="29.5" fill="#000"/>
<rect x="2728.5" y="297.5" width="30.5" height="29.5" fill="#fff"/>
<text x="3039" y="324" font-size="26" font-weight="700" fill="#dcdcdc" stroke="#dcdcdc" stroke-width="0.3">#</text>
<rect x="3065.5" y="289.5" width="160" height="48.5" rx="5" fill="#444" stroke="#5a5a5a" stroke-width="1.5"/>
<text x="3079" y="322" font-size="27.5" fill="#f2f2f2" stroke="#f2f2f2" stroke-width="0.6">000000</text>
<rect x="2661.5" y="354" width="564" height="63.5" fill="#333"/>
<rect x="2665" y="356.5" width="558" height="58" fill="url(#hue)"/>
<rect x="2665" y="356.5" width="558" height="58" fill="url(#shade)"/>
<rect x="2647" y="433" width="622.5" height="3" fill="#3a3a3a"/>
<rect x="2647" y="436" width="622.5" height="16.5" fill="#4f4f4f"/>
<path d="M2933 437v11M2937.2 437v11M2941.4 437v11M2945.6 437v11M2949.8 437v11M2954 437v11M2958.2 437v11M2962.4 437v11M2966.6 437v11M2970.8 437v11M2975 437v11M2979.2 437v11" stroke="#333" stroke-width="2"/>
<!-- ===== SWATCHES ===== -->
<defs>
<linearGradient id="oy" x1="0" x2="1"><stop offset="0" stop-color="#f07a30"/><stop offset="0.5" stop-color="#f0a030"/><stop offset="1" stop-color="#e8d040"/></linearGradient>
<pattern id="chk" width="10" height="10" patternUnits="userSpaceOnUse"><rect width="10" height="10" fill="#dff6fa"/><rect width="5" height="5" fill="#7fd8ea"/><rect x="5" y="5" width="5" height="5" fill="#7fd8ea"/></pattern>
</defs>
<rect x="2676" y="660" width="610" height="642" rx="10" fill="#000" opacity="0.14"/>
<rect x="2679" y="661" width="602" height="637" rx="8" fill="#3a3a3a"/>
<rect x="2680" y="662" width="600" height="32" rx="7" fill="#444"/>
<rect x="2680" y="680" width="600" height="14" fill="#444"/>
<rect x="2680" y="693" width="600" height="1.5" fill="#3a3a3a"/>
<path d="M2694 674L2707 687M2707 674L2694 687" stroke="#d0d0d0" stroke-width="2.2"/>
<path d="M3254 673L3248 678.5L3254 684M3264 673L3258 678.5L3264 684" stroke="#d0d0d0" stroke-width="2" fill="none"/>
<rect x="2680" y="694.5" width="600" height="583.5" fill="#535353"/>
<rect x="2844" y="694.5" width="436" height="66.5" fill="#434343"/>
<rect x="2844" y="760" width="436" height="1.5" fill="#3d3d3d"/>
<text x="2703.5" y="735" font-size="25.5" font-weight="700" fill="#f2f2f2" stroke="#f2f2f2" stroke-width="0.3">Swatches</text>
<path d="M3240.5 720h25M3240.5 728h25M3240.5 736h25" stroke="#d0d0d0" stroke-width="2.4"/>
<rect x="2694.5" y="777.5" width="48.5" height="49.5" fill="#fff" stroke="#111" stroke-width="2"/>
<rect x="2719" y="802" width="49" height="50" fill="#2a2a2a"/>
<rect x="2721" y="804" width="45" height="46" fill="#000" stroke="#fff" stroke-width="2"/>
<rect x="2731" y="815" width="25" height="24" fill="#535353" stroke="#fff" stroke-width="2.2"/>
<rect x="3146.5" y="778.5" width="119" height="56.5" rx="4" fill="#535353" stroke="#4a4a4a" stroke-width="1.5"/>
<rect x="3205" y="779.5" width="60" height="54.5" rx="3" fill="#323232"/>
<path d="M3160 792h31M3160 802h31M3160 812h31M3160 822h31" stroke="#c8c8c8" stroke-width="3"/>
<g fill="#fff">
<rect x="3220" y="790" width="10" height="10"/><rect x="3233.5" y="790" width="10" height="10"/><rect x="3247" y="790" width="10" height="10"/>
<rect x="3220" y="802.5" width="10" height="10"/><rect x="3233.5" y="802.5" width="10" height="10"/><rect x="3247" y="802.5" width="10" height="10"/>
<rect x="3220" y="815" width="10" height="10"/><rect x="3233.5" y="815" width="10" height="10"/><rect x="3247" y="815" width="10" height="10"/>
</g>
<rect x="2694.5" y="864.5" width="572" height="362.5" fill="#535353" stroke="#5e5e5e" stroke-width="1.5"/>
<rect x="2696.0" y="867" width="32.5" height="32.5" fill="#fff"/><path d="M2699.0 896.5L2725.5 870" stroke="#e8341e" stroke-width="3.5"/>
<rect x="2731.0" y="867" width="32.5" height="32.5" fill="#efefef"/><circle cx="2747.25" cy="883.25" r="9" fill="none" stroke="#444" stroke-width="1.5"/><circle cx="2747.25" cy="883.25" r="3" fill="none" stroke="#444" stroke-width="1.5"/><path d="M2734.0 883.25H2760.5M2747.25 870V896.5" stroke="#444" stroke-width="1.3"/>
<rect x="2766.0" y="867" width="32.5" height="32.5" fill="#ffffff"/>
<rect x="2801.0" y="867" width="32.5" height="32.5" fill="#fff"/><rect x="2803.5" y="869.5" width="27.5" height="27.5" fill="#000"/>
<rect x="2836.0" y="867" width="32.5" height="32.5" fill="#e8382b"/>
<rect x="2871.0" y="867" width="32.5" height="32.5" fill="#fdf94f"/>
<rect x="2906.0" y="867" width="32.5" height="32.5" fill="#74f23f"/>
<rect x="2941.0" y="867" width="32.5" height="32.5" fill="#7bfbfd"/>
<rect x="2976.0" y="867" width="32.5" height="32.5" fill="#0000f4"/>
<rect x="3011.0" y="867" width="32.5" height="32.5" fill="#e93ef6"/>
<rect x="3046.0" y="867" width="32.5" height="32.5" fill="#b03537"/>
<rect x="3081.0" y="867" width="32.5" height="32.5" fill="#d9352f"/>
<rect x="3116.0" y="867" width="32.5" height="32.5" fill="#e06a37"/>
<rect x="3151.0" y="867" width="32.5" height="32.5" fill="#eb9b3c"/>
<rect x="3186.0" y="867" width="32.5" height="32.5" fill="#f0b553"/>
<rect x="2696.0" y="902" width="32.5" height="32.5" fill="#f8e64f"/>
<rect x="2731.0" y="902" width="32.5" height="32.5" fill="#d8de55"/>
<rect x="2766.0" y="902" width="32.5" height="32.5" fill="#9cc35a"/>
<rect x="2801.0" y="902" width="32.5" height="32.5" fill="#63b35b"/>
<rect x="2836.0" y="902" width="32.5" height="32.5" fill="#3d914f"/>
<rect x="2871.0" y="902" width="32.5" height="32.5" fill="#2a683c"/>
<rect x="2906.0" y="902" width="32.5" height="32.5" fill="#55ad7f"/>
<rect x="2941.0" y="902" width="32.5" height="32.5" fill="#4aa7a1"/>
<rect x="2976.0" y="902" width="32.5" height="32.5" fill="#5aa9e1"/>
<rect x="3011.0" y="902" width="32.5" height="32.5" fill="#2f6fb7"/>
<rect x="3046.0" y="902" width="32.5" height="32.5" fill="#2f3191"/>
<rect x="3081.0" y="902" width="32.5" height="32.5" fill="#1c1562"/>
<rect x="3116.0" y="902" width="32.5" height="32.5" fill="#652e91"/>
<rect x="3151.0" y="902" width="32.5" height="32.5" fill="#8b2f90"/>
<rect x="3186.0" y="902" width="32.5" height="32.5" fill="#8e1c5b"/>
<rect x="2696.0" y="937" width="32.5" height="32.5" fill="#c0275c"/>
<rect x="2731.0" y="937" width="32.5" height="32.5" fill="#d93c7e"/>
<rect x="2766.0" y="937" width="32.5" height="32.5" fill="#c8b59b"/>
<rect x="2801.0" y="937" width="32.5" height="32.5" fill="#9c8a77"/>
<rect x="2836.0" y="937" width="32.5" height="32.5" fill="#726555"/>
<rect x="2871.0" y="937" width="32.5" height="32.5" fill="#4f433d"/>
<rect x="2906.0" y="937" width="32.5" height="32.5" fill="#c49f72"/>
<rect x="2941.0" y="937" width="32.5" height="32.5" fill="#a48058"/>
<rect x="2976.0" y="937" width="32.5" height="32.5" fill="#8a6640"/>
<rect x="3011.0" y="937" width="32.5" height="32.5" fill="#6d4b2a"/>
<rect x="3046.0" y="937" width="32.5" height="32.5" fill="#5a381e"/>
<rect x="3081.0" y="937" width="32.5" height="32.5" fill="#3e2314"/>
<rect x="3116.0" y="937" width="32.5" height="32.5" fill="url(#bw)"/>
<rect x="3151.0" y="937" width="32.5" height="32.5" fill="url(#oy)"/>
<rect x="3186.0" y="937" width="32.5" height="32.5" fill="url(#chk)"/>
<rect x="2696.0" y="972" width="32.5" height="32.5" fill="#2f5fa8"/><path d="M2700.0 982q6 -6 12 0t12 0M2700.0 992q6 -6 12 0t12 0M2702.0 1000q5 -5 10 0t10 0" stroke="#c8d8f0" stroke-width="2" fill="none"/>
<path d="M2698 1022h11l3 3h13v17h-27z" fill="#c8c8c8"/><path d="M2698 1027h27" stroke="#535353" stroke-width="1.5"/>
<rect x="2731.0" y="1012" width="32.5" height="32.5" fill="#7ec8cd"/>
<rect x="2766.0" y="1012" width="32.5" height="32.5" fill="#8790c5"/>
<rect x="2801.0" y="1012" width="32.5" height="32.5" fill="#b9a1cc"/>
<path d="M2698 1062h11l3 3h13v17h-27z" fill="#c8c8c8"/><path d="M2698 1067h27" stroke="#535353" stroke-width="1.5"/>
<rect x="2731.0" y="1052" width="32.5" height="32.5" fill="#000000"/>
<rect x="2766.0" y="1052" width="32.5" height="32.5" fill="#1a1a1a"/>
<rect x="2801.0" y="1052" width="32.5" height="32.5" fill="#333333"/>
<rect x="2836.0" y="1052" width="32.5" height="32.5" fill="#4d4d4d"/>
<rect x="2871.0" y="1052" width="32.5" height="32.5" fill="#666666"/>
<rect x="2906.0" y="1052" width="32.5" height="32.5" fill="#808080"/>
<rect x="2941.0" y="1052" width="32.5" height="32.5" fill="#999999"/>
<rect x="2976.0" y="1052" width="32.5" height="32.5" fill="#b3b3b3"/>
<rect x="3011.0" y="1052" width="32.5" height="32.5" fill="#cccccc"/>
<rect x="3046.0" y="1052" width="32.5" height="32.5" fill="#e6e6e6"/>
<rect x="3081.0" y="1052" width="32.5" height="32.5" fill="#f2f2f2"/>
<path d="M3240 888L3249 880L3258 888" stroke="#5e5e5e" stroke-width="2" fill="none"/>
<path d="M3240 1208L3249 1215L3258 1208" stroke="#5e5e5e" stroke-width="2" fill="none"/>
<g fill="#c8c8c8">
<rect x="2708" y="1240" width="5" height="24"/><rect x="2715" y="1240" width="6" height="24"/><path d="M2723 1240l4 -1 8 25h-5z"/>
<path d="M2736 1262h6l-3 3z"/>
<path d="M2775 1240h25v-4h-27v8M2780 1245h25v20h-23v-2" fill="none" stroke="#c8c8c8" stroke-width="2.4"/>
<path d="M2796 1245v8l-3 -2l-3 2v-8z"/>
<path d="M2773 1259h11v-4l7 7l-7 7v-4h-11z"/>
<rect x="2920" y="1239.5" width="26" height="25" />
<path d="M2953 1262h8l-4 4z"/>
<rect x="2988" y="1239" width="28" height="27" fill="none" stroke="#c8c8c8" stroke-width="2.4"/>
<rect x="2988" y="1239" width="28" height="5"/>
<path d="M2994 1250h3M2994 1255h3M2994 1260h3M3000 1250h10M3000 1255h10M3000 1260h10" stroke="#c8c8c8" stroke-width="2"/>
<path d="M3051 1239h11l3 3h18v23h-32z"/>
<rect x="3121" y="1239.5" width="26" height="26" fill="none" stroke="#c8c8c8" stroke-width="2.4"/>
<path d="M3134 1246v13M3127.5 1252.5h13" stroke="#c8c8c8" stroke-width="2.4"/>
<path d="M3184 1243h26M3191 1243v-4h12v4" fill="none" stroke="#c8c8c8" stroke-width="2.4"/>
<path d="M3186 1243l2 22h18l2 -22" fill="none" stroke="#c8c8c8" stroke-width="2.4"/>
<path d="M3193 1248v13M3197 1248v13M3201 1248v13" stroke="#c8c8c8" stroke-width="1.8"/>
</g>
<g fill="#535353"><rect x="2922.5" y="1242" width="5" height="5"/><rect x="2930.5" y="1242" width="5" height="5" fill="#8a8a8a"/><rect x="2938" y="1242" width="5" height="5"/><rect x="2922.5" y="1250" width="5" height="5" fill="#8a8a8a"/><rect x="2930.5" y="1250" width="5" height="5"/><rect x="2930.5" y="1257.5" width="5" height="5"/><rect x="2938" y="1257.5" width="5" height="5"/></g>
<path d="M3051 1245h32" stroke="#535353" stroke-width="1.5"/>
<rect x="2680" y="1278" width="600" height="3" fill="#3a3a3a"/>
<rect x="2680" y="1281" width="600" height="15.5" fill="#4f4f4f"/>
<path d="M2957 1282v10M2961.2 1282v10M2965.4 1282v10M2969.6 1282v10M2973.8 1282v10M2978 1282v10M2982.2 1282v10M2986.4 1282v10M2990.6 1282v10M2994.8 1282v10M2999 1282v10M3003.2 1282v10" stroke="#333" stroke-width="2"/>
<!-- ===== PROPERTIES ===== -->
<path d="M3965 180L3970 185L3965 190M3976 180L3981 185L3976 190" stroke="#d0d0d0" stroke-width="2" fill="none"/>
<rect x="3548" y="201" width="446" height="67.5" fill="#434343"/>
<rect x="3548" y="267" width="446" height="1.5" fill="#3d3d3d"/>
<rect x="3703.5" y="201" width="1.5" height="67" fill="#3a3a3a"/>
<text x="3396" y="242.5" font-size="26.5" font-weight="700" fill="#f2f2f2" textLength="130.5" lengthAdjust="spacingAndGlyphs" stroke="#f2f2f2" stroke-width="0.3">Properties</text>
<text x="3570.5" y="242.5" font-size="26.5" font-weight="700" fill="#b4b4b4" textLength="112" lengthAdjust="spacingAndGlyphs" stroke="#b4b4b4" stroke-width="0.3">Libraries</text>
<g fill="#dadada" font-size="27" stroke="#dadada" stroke-width="0.6">
<text x="3398" y="321" textLength="155" lengthAdjust="spacingAndGlyphs">Anchor Point</text>
<text x="3398" y="408" textLength="125" lengthAdjust="spacingAndGlyphs">Transform</text>
<text x="3471" y="466">X:</text>
<text x="3471" y="530">Y:</text>
<text x="3685" y="466">W:</text>
<text x="3685" y="530">H:</text>
<text x="3398" y="720.5" textLength="141" lengthAdjust="spacingAndGlyphs">Appearance</text>
<text x="3473" y="792.5" textLength="33" lengthAdjust="spacingAndGlyphs">Fill</text>
<text x="3473" y="861" textLength="75" lengthAdjust="spacingAndGlyphs">Stroke</text>
<text x="3473" y="934" textLength="92" lengthAdjust="spacingAndGlyphs">Opacity</text>
<text x="3398" y="1160.5" textLength="101" lengthAdjust="spacingAndGlyphs">Convert:</text>
<text x="3398" y="1251" textLength="106" lengthAdjust="spacingAndGlyphs">Anchors:</text>
<text x="3398" y="1340" textLength="62" lengthAdjust="spacingAndGlyphs">Align</text>
<text x="3398" y="1562.5" textLength="165" lengthAdjust="spacingAndGlyphs">Quick Actions</text>
</g>
<path d="M3474 866.5h75M3474 939.5h92" stroke="#dadada" stroke-width="2.5" stroke-dasharray="2.5 2.6"/>
<g fill="#474747">
<rect x="3373" y="352" width="595" height="2"/>
<rect x="3373" y="663.5" width="595" height="2"/>
<rect x="3373" y="1091.5" width="595" height="2"/>
<rect x="3373" y="1194.5" width="595" height="2"/>
<rect x="3373" y="1283.5" width="595" height="2"/>
<rect x="3373" y="1494.5" width="595" height="2"/>
</g>
<use href="#tpt" x="1317" y="363.5"/>
<rect x="3510" y="431.5" width="138" height="48.5" rx="4" fill="#444" stroke="#5c5c5c" stroke-width="1.5"/>
<text x="3523" y="461.5" font-size="28" fill="#f2f2f2" textLength="116" lengthAdjust="spacingAndGlyphs" stroke="#f2f2f2" stroke-width="0.6">0.7048 in</text>
<rect x="3510" y="496.5" width="138" height="48.5" rx="4" fill="#444" stroke="#5c5c5c" stroke-width="1.5"/>
<text x="3523" y="527" font-size="28" fill="#f2f2f2" textLength="99" lengthAdjust="spacingAndGlyphs" stroke="#f2f2f2" stroke-width="0.6">3.812 in</text>
<rect x="3730" y="431" width="139.5" height="49.5" rx="5" fill="#575757"/>
<text x="3744" y="461.5" font-size="28" fill="#6c6c6c" stroke="#6c6c6c" stroke-width="0.6">0 in</text>
<rect x="3730" y="496" width="139.5" height="49.5" rx="5" fill="#575757"/>
<text x="3744" y="527" font-size="28" fill="#6c6c6c" stroke="#6c6c6c" stroke-width="0.6">0 in</text>
<rect x="3894" y="460" width="58.5" height="59" rx="4" fill="#323232"/>
<g fill="none" stroke="#fff" stroke-width="4">
<rect x="3917.2" y="471.5" width="13.6" height="24" rx="6.8"/><rect x="3917.2" y="484.5" width="13.6" height="23" rx="6.8"/>
</g>
<path d="M3914.5 484.5Q3918 480.5 3923 480.5M3933.5 494.5Q3930 498.5 3925 498.5" stroke="#323232" stroke-width="1.6" fill="none"/>
<path d="M3461 588.5H3487M3461 588.5L3478 569M3476 578Q3482 582 3482 588" stroke="#c8c8c8" stroke-width="2.4" fill="none"/>
<text x="3492" y="590" font-size="27" fill="#c8c8c8" stroke="#c8c8c8" stroke-width="0.6">:</text>
<rect x="3518" y="560" width="140" height="52" rx="5" fill="#575757"/>
<text x="3529" y="596" font-size="28" fill="#6c6c6c" stroke="#6c6c6c" stroke-width="0.6">0°</text>
<path d="M3624 580L3633 589L3642 580" stroke="#6c6c6c" stroke-width="2.2" fill="none"/>
<g fill="#c8c8c8">
<path d="M3764.5 575V602L3776 588.5Z" fill="none" stroke="#c8c8c8" stroke-width="2.2"/>
<path d="M3797.5 574V603L3784 588.5Z"/>
<path d="M3780 572V606" stroke="#fff" stroke-width="2" stroke-dasharray="2.5 2.5"/>
<path d="M3826 573H3854L3840 586Z"/>
<path d="M3827 605H3853L3840 592Z" fill="none" stroke="#c8c8c8" stroke-width="2.2"/>
<path d="M3825 589H3855" stroke="#fff" stroke-width="2" stroke-dasharray="2.5 2.5"/>
<circle cx="3920" cy="639.5" r="4.6"/><circle cx="3932.5" cy="639.5" r="4.6"/><circle cx="3945" cy="639.5" r="4.6"/>
<circle cx="3920" cy="1067.5" r="4.6"/><circle cx="3932.5" cy="1067.5" r="4.6"/><circle cx="3945" cy="1067.5" r="4.6"/>
<circle cx="3920" cy="1469.5" r="4.6"/><circle cx="3932.5" cy="1469.5" r="4.6"/><circle cx="3945" cy="1469.5" r="4.6"/>
</g>
<!-- appearance -->
<rect x="3398.5" y="758" width="43.5" height="42.5" fill="#fff" stroke="#333" stroke-width="2"/>
<rect x="3398.5" y="830.5" width="43.5" height="42.5" fill="#000" stroke="#333" stroke-width="1"/>
<rect x="3400.5" y="832.5" width="39.5" height="38.5" fill="#000" stroke="#fff" stroke-width="2"/>
<rect x="3410.5" y="842" width="19.5" height="19.5" fill="#535353" stroke="#fff" stroke-width="2"/>
<defs><pattern id="chk2" width="20" height="20" patternUnits="userSpaceOnUse" x="3400" y="905"><rect width="20" height="20" fill="#6a6a6a"/><rect width="10" height="10" fill="#555"/><rect x="10" y="10" width="10" height="10" fill="#555"/></pattern></defs>
<rect x="3400" y="905" width="40" height="38.5" fill="url(#chk2)" stroke="#c8c8c8" stroke-width="2"/>
<rect x="3605.5" y="826" width="173" height="49.5" rx="5" fill="#4b4b4b" stroke="#5c5c5c" stroke-width="1.5"/>
<rect x="3650" y="826.5" width="83" height="48.5" fill="#444"/>
<rect x="3649.5" y="826" width="1.5" height="49.5" fill="#5c5c5c"/><rect x="3732.5" y="826" width="1.5" height="49.5" fill="#5c5c5c"/>
<path d="M3618 842L3627 833L3636 842M3618 860L3627 869L3636 860" stroke="#e0e0e0" stroke-width="2" fill="none"/>
<text x="3661.5" y="856.5" font-size="28" fill="#f2f2f2" textLength="46" lengthAdjust="spacingAndGlyphs" stroke="#f2f2f2" stroke-width="0.6">1 pt</text>
<path d="M3745 847L3754 856L3763 847" stroke="#e0e0e0" stroke-width="2.2" fill="none"/>
<rect x="3605.5" y="898" width="173" height="50" rx="5" fill="#4b4b4b" stroke="#5c5c5c" stroke-width="1.5"/>
<rect x="3606.5" y="899" width="126" height="48" rx="4" fill="#444"/>
<rect x="3732.5" y="898" width="1.5" height="50" fill="#5c5c5c"/>
<text x="3617" y="928.5" font-size="28" fill="#f2f2f2" textLength="62" lengthAdjust="spacingAndGlyphs" stroke="#f2f2f2" stroke-width="0.6">100%</text>
<path d="M3751 914L3759 923L3751 932" stroke="#e0e0e0" stroke-width="2.2" fill="none"/>
<text x="3414" y="1019" font-size="30" font-style="italic" fill="#b8b8b8" font-family="Liberation Serif" stroke="#b8b8b8" stroke-width="0.6">fx</text>
<path d="M3444 1017h6l-3 3z" fill="#c8c8c8"/>
<!-- convert / anchors -->
<use href="#cv1" x="3151.8" y="1023.3"/>
<use href="#cv2" x="3143.7" y="1023"/>
<use href="#an1" x="2602.8" y="1113.5"/>
<use href="#an2" x="2595.5" y="1112.7"/>
<use href="#an3" x="2589" y="1112.7"/>
<!-- align -->
<use fill="#c8c8c8" href="#al0" x="1845" y="1276.4"/>
<use fill="#c8c8c8" href="#al1" x="1838" y="1277"/>
<use fill="#c8c8c8" href="#al2" x="1849" y="1277"/>
<use fill="#c8c8c8" href="#al3" x="1859.5" y="1277"/>
<use fill="#c8c8c8" href="#al4" x="1856.5" y="1277.7"/>
<use fill="#c8c8c8" href="#al5" x="1867" y="1277"/>
<use fill="#c8c8c8" href="#al6" x="1876" y="1277"/>
<!-- quick actions -->
<rect x="3398.5" y="1596" width="510.5" height="50" rx="4" fill="#535353" stroke="#707070" stroke-width="2"/>
<text x="3555" y="1633" font-size="27" fill="#f2f2f2" textLength="195" lengthAdjust="spacingAndGlyphs" stroke="#f2f2f2" stroke-width="0.6">Start Global Edit</text>
<rect x="3912" y="1596" width="52.5" height="50" rx="4" fill="#484848" stroke="#707070" stroke-width="2"/>
<path d="M3929 1617L3938 1625L3947 1617" stroke="#e0e0e0" stroke-width="2.2" fill="none"/>
<!-- ===== STATUS ===== -->
<rect x="3228" y="1341" width="37" height="63" rx="18.5" fill="#5e5e5e"/>
<path d="M3237 2478L3246.5 2487L3256 2478" stroke="#c0c0c0" stroke-width="2" fill="none"/>
<rect x="3225" y="2503" width="41" height="40" fill="#535353"/>
<rect x="184" y="2502" width="1262" height="41" fill="#4a4a4a"/>
<rect x="1446" y="2503" width="1779" height="40" fill="#454545"/>
<rect x="2306" y="2505" width="62.5" height="40" rx="20" fill="#575757"/>
<path d="M3199 2515L3209 2525L3199 2535" stroke="#c0c0c0" stroke-width="2" fill="none"/>
<path d="M1473 2515L1463 2525L1473 2535" stroke="#c0c0c0" stroke-width="2" fill="none"/>
<rect x="1402.5" y="2503" width="43.5" height="40" fill="#4f4f4f"/>
<path d="M1419 2517L1432 2526L1419 2535.5Z" fill="#c8c8c8"/>
<g fill="#3e3e3e" stroke="#555" stroke-width="1.5">
<rect x="195.5" y="2505.5" width="168.5" height="45" rx="4"/>
<rect x="377" y="2505.5" width="170" height="45" rx="4"/>
<rect x="652.5" y="2505.5" width="144" height="45" rx="4"/>
</g>
<g fill="#474747">
<rect x="320.5" y="2506.5" width="43" height="40"/>
<rect x="503.5" y="2506.5" width="43" height="40"/>
<rect x="752.5" y="2506.5" width="43" height="40"/>
</g>
<path d="M333 2525L341.5 2533.5L350 2525M515 2525L523.5 2533.5L532 2525M765 2525L773.5 2533.5L782 2525" stroke="#e0e0e0" stroke-width="2.2" fill="none"/>
<text x="203.5" y="2538" font-size="27" fill="#f2f2f2" textLength="47.5" lengthAdjust="spacingAndGlyphs" stroke="#f2f2f2" stroke-width="0.6">80%</text>
<text x="385.5" y="2538" font-size="27" fill="#f2f2f2" stroke="#f2f2f2" stroke-width="0.6">0°</text>
<text x="662" y="2538" font-size="27" fill="#f2f2f2" stroke="#f2f2f2" stroke-width="0.6">1</text>
<g fill="#7a7a7a">
<rect x="569" y="2515" width="3.5" height="20.5"/><path d="M589.5 2515V2535.5L574 2525.2Z"/>
<path d="M627 2515V2535.5L614.5 2525.2Z"/>
<path d="M822 2515V2535.5L834.5 2525.2Z"/>
<path d="M860 2515V2535.5L875.5 2525.2Z"/><rect x="877" y="2515" width="3.5" height="20.5"/>
</g>
<text x="1051.5" y="2538" font-size="27" fill="#d8d8d8" textLength="199.5" lengthAdjust="spacingAndGlyphs" stroke="#d8d8d8" stroke-width="0.6">Toggle Selection</text>
</svg>
</body></html>
